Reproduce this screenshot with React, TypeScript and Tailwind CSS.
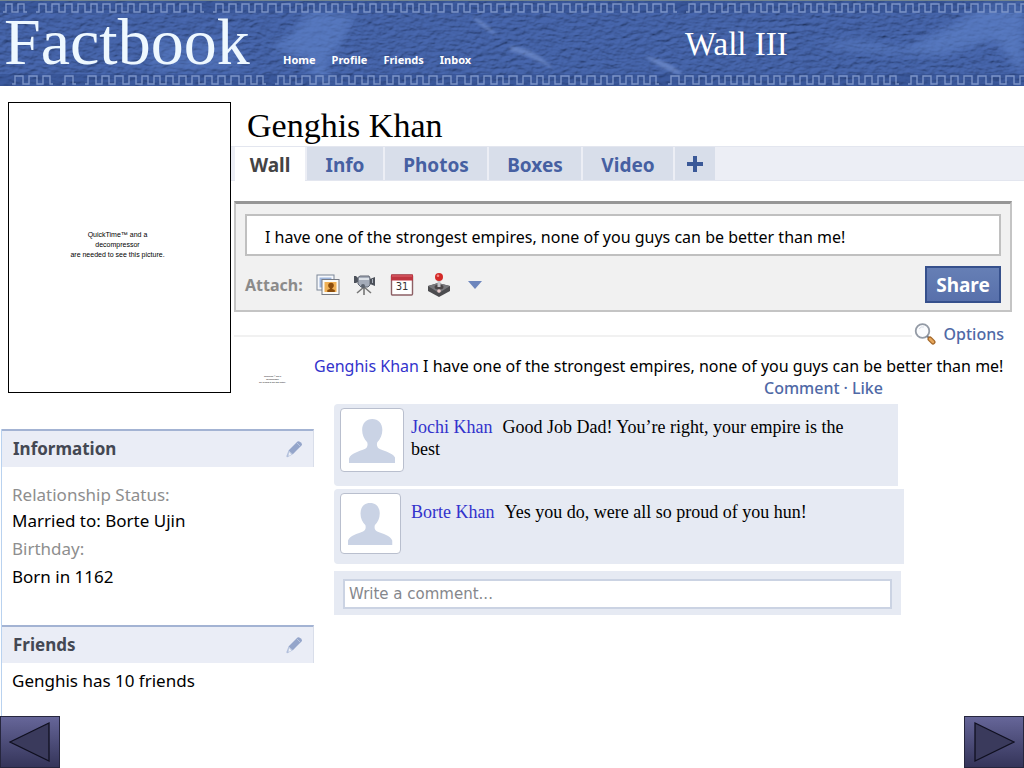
import type { ReactNode } from "react";

const NOTO = "font-['Noto_Sans','Open_Sans',sans-serif]";
const SERIF = "font-['Liberation_Serif',serif]";

function stitch(y: number, seed: number): string {
  let d = "";
  let x = 3;
  let s = seed;
  while (x < 2000) {
    s = (s * 73 + 41) % 997;
    const w = 6 + (s % 3);
    if (s % 13 === 0) {
      x += 9;
      continue;
    }
    d += `M${x} ${y + 8}h3v-8h${w}v8h3`;
    x += w + 6;
  }
  return d;
}

function Denim() {
  return (
    <svg className="absolute inset-0 h-full w-full" aria-hidden="true">
      <defs>
        <filter id="grain" x="0" y="0" width="100%" height="100%">
          <feTurbulence type="fractalNoise" baseFrequency="0.12 0.24" numOctaves="3" seed="8" result="n" />
          <feDiffuseLighting in="n" surfaceScale="2.2" lightingColor="#5877be" result="l">
            <feDistantLight azimuth="240" elevation="48" />
          </feDiffuseLighting>
        </filter>
        <filter id="soft" x="-20%" y="-20%" width="140%" height="140%">
          <feGaussianBlur stdDeviation="5" />
        </filter>
        <filter id="streak" x="-20%" y="-50%" width="140%" height="200%">
          <feGaussianBlur stdDeviation="1.5" />
        </filter>
        <filter id="thread" x="0" y="-1" width="100%" height="3">
          <feGaussianBlur stdDeviation="0.6" />
        </filter>
      </defs>
      <rect width="100%" height="100%" fill="#3a5aa3" />
      <rect width="100%" height="100%" filter="url(#grain)" opacity="0.5" />
      <g fill="#6487cf" opacity="0.55" filter="url(#soft)">
        <path d="M310 10l45 5-12 25-18 25 10 20-22 0-4-25-38-12 20-14z" />
        <path d="M1024 0v75l-30-35-50 15-60-2-70-8 40-4 50 8 50-25 30-20z" />
        <path d="M150 40h90v30h-90z" opacity="0.6" />
      </g>
      <g fill="#84a0dc" opacity="0.5" filter="url(#streak)">
        <path d="M472 16q14 6 26 20q-18-8-26-20zM510 46q26 2 44 24q-22-14-44-19zM644 56q26 4 40 20q-22-6-40-20z" />
      </g>
      <rect width="100%" height="13" fill="#2a4684" opacity="0.4" />
      <rect y="74" width="100%" height="12" fill="#2a4684" opacity="0.4" />
      <g fill="none" stroke="#93a9d8" strokeWidth="1.4" opacity="0.75" filter="url(#thread)">
        <path d={stitch(4, 17)} />
        <path d={stitch(76, 91)} />
      </g>
      <rect width="100%" height="1" fill="#71858f" />
    </svg>
  );
}

function Silhouette({ className }: { className: string }) {
  return (
    <span className={`flex items-end justify-center rounded-sm border border-[#b9bfce] bg-white pb-2 ${className}`}>
      <svg viewBox="0 0 46 44" className="w-3/4" fill="#cad3e5" aria-hidden="true">
        <path d="M23 0c-6 0-10 4-10 11 0 5 2 9 5 12 1 3 0 6-3 7-5 2-13 4-15 9v5h46v-5c-2-5-10-7-15-9-3-1-4-4-3-7 3-3 5-7 5-12 0-7-4-11-10-11z" />
      </svg>
    </span>
  );
}

function Pencil() {
  return (
    <svg width="18" height="18" viewBox="0 0 18 18" aria-hidden="true">
      <path d="M3.500 10.500L12.500 1.500q1-1 3 .8t1.500 2.700L7.800 14.200z" fill="#94a5ca" />
      <path d="M3.500 10.500l4.300 3.700-5.300 3q-1.500 0-1-1.500z" fill="#b3c0dc" />
      <path d="M4 12l2.500 2.500-3 1.500z" fill="#eef1f8" />
      <path d="M12 3l3.500 3.500" stroke="#b8c4de" />
    </svg>
  );
}

function PhotosIcon() {
  return (
    <svg width="24" height="22" viewBox="0 0 24 22" aria-hidden="true">
      <rect x="1" y="1" width="17" height="15" fill="#f6f8fc" stroke="#7d8798" />
      <rect x="3.500" y="3.500" width="12" height="10" fill="#9db5dc" />
      <rect x="6" y="5.500" width="17" height="15" fill="#fbfaf6" stroke="#777b84" />
      <rect x="8.500" y="8" width="12" height="10" fill="#f0b055" />
      <circle cx="15" cy="11.500" r="2.800" fill="#8a4c0c" />
      <path d="M13.800 13h2.500v2l2.500 1v2h-7.500v-2l2.500-1z" fill="#8a4c0c" />
    </svg>
  );
}

function CameraIcon() {
  return (
    <svg width="24" height="22" viewBox="0 0 24 22" aria-hidden="true">
      <path d="M11 13l-7 6M11 13v8M11 13l7 6" stroke="#777" strokeWidth="1.600" />
      <path d="M1 2h2l2 2v4L3 9H1z" fill="#4d525b" />
      <path d="M5 3.500L7 2h9l1 2v7l-2 2H8l-3-3z" fill="#a4abb8" stroke="#616773" />
      <path d="M6 5h10" stroke="#e3e7ed" strokeWidth="1.800" />
      <circle cx="10" cy="12" r="2" fill="#5b626d" />
      <path d="M17 5l5-2v9l-5-2z" fill="#4c515a" />
      <path d="M19.500 5v4" stroke="#aeb4be" />
    </svg>
  );
}

function CalendarIcon() {
  return (
    <svg width="24" height="22" viewBox="0 0 24 22" aria-hidden="true">
      <rect x="1.500" y="1" width="21" height="20" rx="1" fill="#fff" stroke="#8d6065" strokeWidth="1.400" />
      <path d="M1 0.500h22v6H1z" fill="#bf3540" />
      <path d="M2 2h20" stroke="#dd6870" />
      <text x="12" y="16" textAnchor="middle" fontSize="10" fontFamily="DejaVu Sans, sans-serif" fill="#333">
        31
      </text>
    </svg>
  );
}

function JoystickIcon() {
  return (
    <svg width="24" height="24" viewBox="0 0 24 24" aria-hidden="true">
      <path d="M1 13l10-3 12 3v5l-11 6L1 18z" fill="#4c4c4f" />
      <path d="M1 13l10-3 12 3-11 7z" fill="#77777b" />
      <ellipse cx="12" cy="14" rx="4.500" ry="2.500" fill="#4a4547" />
      <path d="M12 5v9" stroke="#c4c4c8" strokeWidth="3" />
      <circle cx="12" cy="4" r="4" fill="#d42a28" />
      <circle cx="11" cy="2.800" r="1.300" fill="#f28b86" />
      <circle cx="12" cy="18" r="1.800" fill="#e9caca" />
    </svg>
  );
}

function MagnifierIcon() {
  return (
    <svg width="22" height="22" viewBox="0 0 22 22" aria-hidden="true">
      <circle cx="8.500" cy="8" r="6.800" fill="#fbfcfe" stroke="#949ba6" strokeWidth="1.800" />
      <path d="M5 6q2-3 5-2" fill="none" stroke="#d7dce5" />
      <path d="M13 13l3 3" stroke="#777d87" strokeWidth="2" />
      <path d="M16 16l3 3" stroke="#a5682a" strokeWidth="5" strokeLinecap="round" />
      <path d="M16 16l3 3" stroke="#e5a65b" strokeWidth="2.500" strokeLinecap="round" />
    </svg>
  );
}

function Panel({ title, className, children }: { title: string; className: string; children: ReactNode }) {
  return (
    <section className={className}>
      <div className="flex h-[38px] items-center justify-between border-t-2 border-r border-[#a3b3d3] border-r-[#d9deea] bg-[#eaedf6] pr-2.5 pl-[11px]">
        <h2 className="text-[17px] leading-6 font-bold text-[#444853]">{title}</h2>
        <button type="button" aria-label={`Edit ${title}`}>
          <Pencil />
        </button>
      </div>
      {children}
    </section>
  );
}

function Comment({ name, text, className, avatar }: { name: string; text: string; className: string; avatar: string }) {
  return (
    <li className={`flex gap-[7px] rounded-l bg-[#e6eaf3] pt-1 pl-1.5 ${className}`}>
      <Silhouette className={avatar} />
      <p className={`flex-1 pt-2 pr-8 text-[18px] leading-[22px] text-black ${SERIF}`}>
        <a href="#profile" className="mr-2.5 text-[#3333cc]">
          {name}
        </a>
        {text}
      </p>
    </li>
  );
}

const tabs = [
  { label: "Info", width: "w-[76px]" },
  { label: "Photos", width: "w-[102px]" },
  { label: "Boxes", width: "w-[92px]" },
  { label: "Video", width: "w-[90px]" },
];

const arrowButton =
  "flex h-[52px] w-[60px] items-center justify-center border border-[#26263e] bg-linear-to-b from-[#666699] to-[#35355a]";

export default function App() {
  return (
    <div className={`flex min-h-screen flex-col bg-white text-black ${NOTO}`}>
      <header className="relative flex h-[86px] shrink-0 overflow-hidden bg-[#3a5aa3] text-white">
        <Denim />
        <div className={`relative w-[283px] pt-[7px] pl-1 text-[66px] leading-[70px] text-[#eef8ff] ${SERIF}`}>Factbook</div>
        <nav className="relative flex w-[402px] gap-4 pt-[52px] text-[11px] leading-4 font-bold">
          <a href="#home">Home</a>
          <a href="#profile">Profile</a>
          <a href="#friends">Friends</a>
          <a href="#inbox">Inbox</a>
        </nav>
        <h1 className={`relative pt-6 text-[33px] leading-10 ${SERIF}`}>Wall III</h1>
      </header>

      <div className="flex">
        <div className="shrink-0 pt-4 pl-2">
          <div className="flex h-[291px] w-[223px] items-center justify-center border border-black pr-1 pb-1.5 text-center font-['Liberation_Sans_Narrow','Liberation_Sans',sans-serif] text-[7px] leading-[10px]">
            <p>
              QuickTime™ and a<br />
              decompressor
              <br />
              are needed to see this picture.
            </p>
          </div>
        </div>

        <main className="min-w-0 flex-1">
          <h2 className={`pt-5 pl-4 text-[34px] leading-10 ${SERIF}`}>Genghis Khan</h2>
          <div className="flex h-[35px] gap-0.5 border-y border-[#e3e6ef] bg-[#eceef5] pl-1 text-[19px] leading-9 font-bold text-[#4660a2]">
            <button type="button" className="h-[35px] w-[70px] bg-white text-[#444]">
              Wall
            </button>
            {tabs.map((tab) => (
              <button key={tab.label} type="button" className={`${tab.width} bg-[#d8deea]`}>
                {tab.label}
              </button>
            ))}
            <button type="button" aria-label="Add tab" className="flex w-10 items-center justify-center bg-[#d8deea]">
              <svg width="16" height="16" viewBox="0 0 16 16" aria-hidden="true">
                <path d="M8 0v16M0 8h16" stroke="#3b5998" strokeWidth="4" />
              </svg>
            </button>
          </div>

          <form
            className="mt-5 mr-3 ml-[3px] border-2 border-t-[3px] border-[#c4c4c4] border-t-[#969696] bg-[#f1f1f1] px-[9px] pt-2.5 pb-[7px]"
            onSubmit={(e) => e.preventDefault()}
          >
            <input
              aria-label="Status"
              defaultValue="I have one of the strongest empires, none of you guys can be better than me!"
              className="block h-[42px] w-full border-2 border-[#c0c0c0] bg-white pt-1 pl-[18px] text-[16px] outline-none"
            />
            <div className="flex h-[47px] items-end">
              <span className="w-[71px] pb-1.5 text-[16px] leading-6 font-bold text-[#8b8b8b]">Attach:</span>
              <div className="flex items-center gap-[13px] pb-1.5">
                <button type="button" aria-label="Photo">
                  <PhotosIcon />
                </button>
                <button type="button" aria-label="Video">
                  <CameraIcon />
                </button>
                <button type="button" aria-label="Event">
                  <CalendarIcon />
                </button>
                <button type="button" aria-label="Game">
                  <JoystickIcon />
                </button>
                <button type="button" aria-label="More" className="pl-1">
                  <svg width="14" height="8" viewBox="0 0 14 8" aria-hidden="true">
                    <path d="M0 0h14L7 8z" fill="#6d86bd" />
                  </svg>
                </button>
              </div>
              <button
                type="submit"
                className="ml-auto h-[37px] w-[76px] border-2 border-[#36508c] bg-linear-to-b from-[#667fb5] to-[#5870ab] text-[19px] leading-6 font-bold text-white"
              >
                Share
              </button>
            </div>
          </form>

          <div className="mt-2 flex h-7 items-center gap-0.5 pr-5 pl-[3px]">
            <div className="mt-1 h-0.5 flex-1 bg-[#f1f1f1]" />
            <a href="#options" className="flex items-center gap-2 text-[16px] leading-6 font-medium text-[#4f69a6]">
              <MagnifierIcon />
              Options
            </a>
          </div>

          <article className="flex pt-1.5 pb-1.5">
            <div className="w-[83px] shrink-0 pt-[21px] text-center font-['Liberation_Sans',sans-serif] text-[2px] leading-[3px]">
              <p>
                QuickTime™ and a<br />
                decompressor
                <br />
                are needed to see this picture.
              </p>
            </div>
            <div className="whitespace-nowrap">
              <p className="text-[16px] leading-6">
                <a href="#profile" className="text-[#3333cc]">
                  Genghis Khan
                </a>{" "}
                I have one of the strongest empires, none of you guys can be better than me!
              </p>
              <div className="flex gap-1 pl-[450px] text-[16px] leading-5 font-medium text-[#4f69a6]">
                <button type="button">Comment</button>
                <span>·</span>
                <button type="button">Like</button>
              </div>
            </div>
          </article>
        </main>
      </div>

      <div className="flex flex-1 items-stretch">
        <aside className="mt-[25px] ml-px w-[313px] shrink-0 border-l border-[#b9d2ef]">
          <Panel title="Information" className="h-[196px]">
            <dl className="mt-4 pl-2.5 text-[17px] leading-7">
              <dt className="leading-6 text-[#8e8e8e]">Relationship Status:</dt>
              <dd>Married to: Borte Ujin</dd>
              <dt className="text-[#8e8e8e]">Birthday:</dt>
              <dd>Born in 1162</dd>
            </dl>
          </Panel>
          <Panel title="Friends" className="">
            <p className="pt-1 pl-2.5 text-[17px] leading-7">Genghis has 10 friends</p>
          </Panel>
        </aside>

        <section className="ml-5 w-[570px]" aria-label="Comments">
          <ul>
            <Comment
              name="Jochi Khan"
              text="Good Job Dad! You’re right, your empire is the best"
              className="mr-1.5 h-[82px]"
              avatar="h-16 w-16"
            />
            <Comment
              name="Borte Khan"
              text="Yes you do, were all so proud of you hun!"
              className="mt-[3px] h-[75px]"
              avatar="mr-[3px] h-[61px] w-[61px]"
            />
          </ul>
          <div className="mt-[7px] mr-[3px] bg-[#e6eaf3] px-[9px] pt-2 pb-1.5">
            <input
              aria-label="Write a comment"
              placeholder="Write a comment..."
              className="block h-[30px] w-full border-2 border-[#cbd3e3] bg-white pl-1 font-['DejaVu_Sans',sans-serif] text-[15px] outline-none placeholder:text-[#85878c]"
            />
          </div>
        </section>
      </div>

      <footer className="flex justify-between">
        <button type="button" aria-label="Previous slide" className={arrowButton}>
          <svg width="42" height="42" viewBox="0 0 42 42" aria-hidden="true">
            <path d="M1 21L40 2v38z" fill="#3a3a5c" stroke="#101020" strokeWidth="1.300" />
          </svg>
        </button>
        <button type="button" aria-label="Next slide" className={arrowButton}>
          <svg width="42" height="42" viewBox="0 0 42 42" aria-hidden="true">
            <path d="M41 21L2 2v38z" fill="#3a3a5c" stroke="#101020" strokeWidth="1.300" />
          </svg>
        </button>
      </footer>
    </div>
  );
}
